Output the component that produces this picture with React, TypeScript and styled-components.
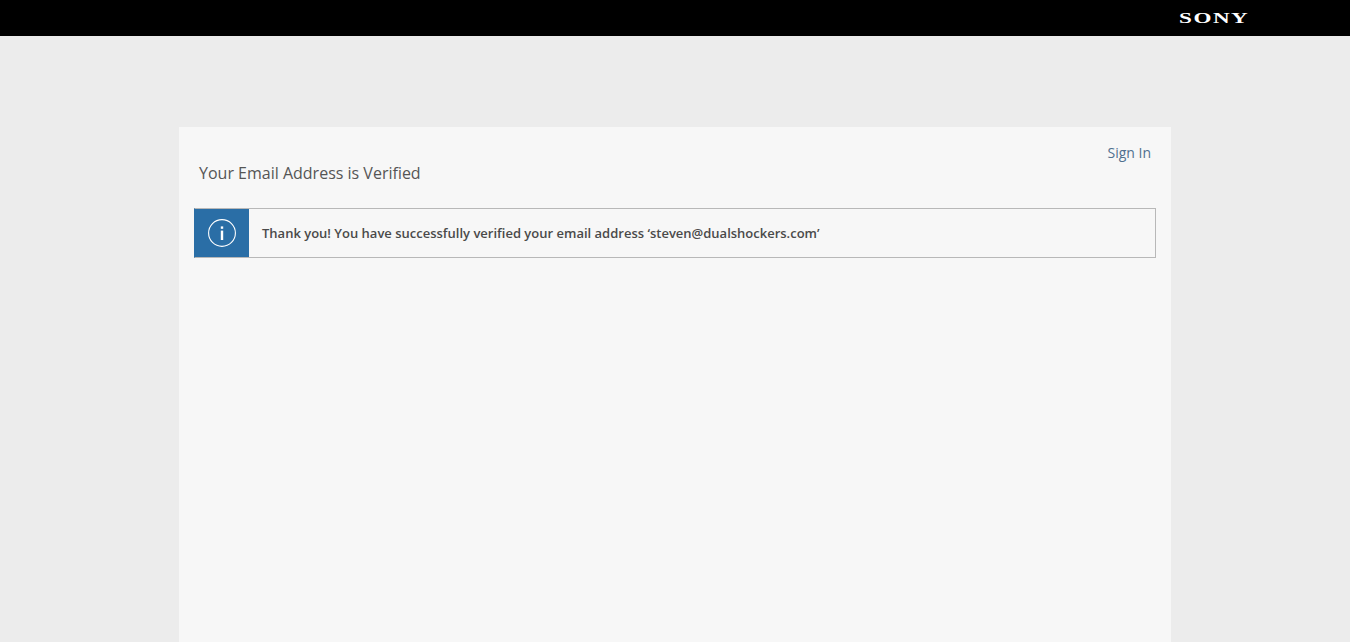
import styled, { createGlobalStyle } from "styled-components";

const GlobalStyle = createGlobalStyle`
  html, body {
    margin: 0;
    padding: 0;
    height: 100%;
    overflow: hidden;
    background: #ececec;
    font-family: "Open Sans", sans-serif;
  }
`

export default function App() {
    return <Page>
        <GlobalStyle/>
        <Header>
            <Logo>SONY</Logo>
        </Header>
        <Card>
            <TopRow>
                <Title>Your Email Address is Verified</Title>
                <SignIn href="#">Sign In</SignIn>
            </TopRow>
            <Notice>
                <NoticeIcon>
                    <svg width="28" height="28" viewBox="0 0 28 28" fill="none">
                        <circle cx="14" cy="14" r="13.4" stroke="#fff" strokeWidth="1.1"/>
                        <rect x="12.8" y="11.6" width="2.4" height="9.4" fill="#fff"/>
                        <rect x="12.8" y="7.4" width="2.4" height="2.4" fill="#fff"/>
                    </svg>
                </NoticeIcon>
                <NoticeText>Thank you! You have successfully verified your email address ‘steven@dualshockers.com’</NoticeText>
            </Notice>
        </Card>
    </Page>
}

const Page = styled.div`
  display: flex;
  flex-direction: column;
  height: 642px;
  overflow: hidden;
  background: #ececec;
`

const Header = styled.header`
  display: flex;
  align-items: center;
  justify-content: flex-end;
  flex: none;
  height: 36px;
  padding-right: 100px;
  box-sizing: border-box;
  background: #000;
`

const Logo = styled.div`
  width: 71px;
  color: #fff;
  font-family: "Liberation Serif", serif;
  font-size: 15px;
  font-weight: 700;
  line-height: 15px;
  letter-spacing: 1px;
  white-space: nowrap;
  transform: scaleX(1.54);
  transform-origin: left center;
`

const Card = styled.main`
  flex: 1;
  width: 992px;
  margin: 91px 0 0 179px;
  padding: 0 15px;
  box-sizing: border-box;
  background: #f7f7f7;
`

const TopRow = styled.div`
  display: flex;
  align-items: flex-start;
  justify-content: space-between;
  height: 81px;
  padding: 16px 5px 0 5px;
  box-sizing: border-box;
`

const Title = styled.h1`
  margin: 19px 0 0 0;
  color: #555;
  font-size: 16px;
  font-weight: 400;
  line-height: 22px;
`

const SignIn = styled.a`
  color: #50708f;
  font-size: 14px;
  line-height: 20px;
  text-decoration: none;
`

const Notice = styled.div`
  display: flex;
  align-items: stretch;
  height: 50px;
  box-sizing: border-box;
  border: 1px solid #b8b8b8;
  border-left-color: #2a6ea6;
`

const NoticeIcon = styled.div`
  display: flex;
  align-items: center;
  justify-content: center;
  flex: none;
  width: 54px;
  background: #2a6ea6;
`

const NoticeText = styled.p`
  margin: 0;
  padding-left: 13px;
  align-self: center;
  color: #4a4a4a;
  font-size: 13px;
  font-weight: 600;
  line-height: 18px;
`
